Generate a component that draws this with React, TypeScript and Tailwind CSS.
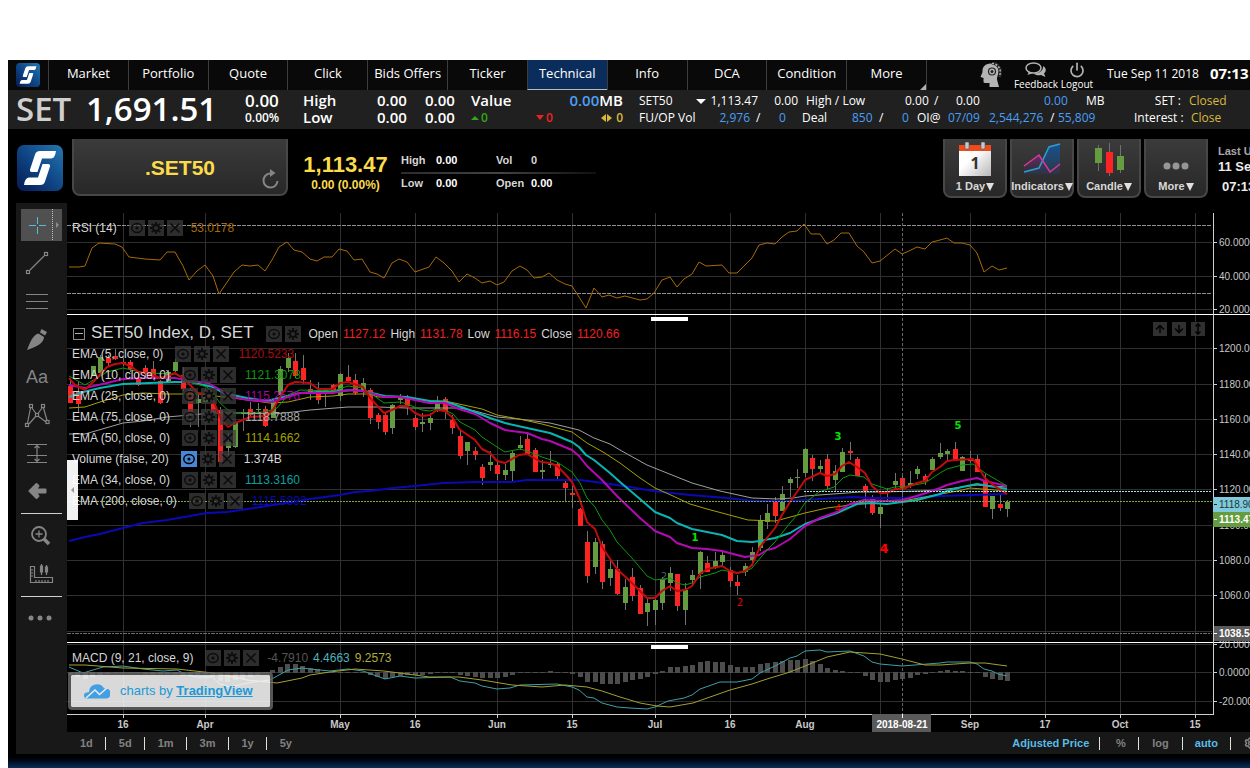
import React from "react";
import { ArrowDown, ArrowUp, MoveVertical, Power, Settings, X } from "lucide-react";

/* x, high, low, body top, body bottom, rising (1) or falling (0) */
const CANDLES: number[][] = [
  [70, 380, 403, 386, 403, 0], [78, 382, 413, 391, 404, 0], [93, 366, 376, 366, 376, 1], [100, 355, 373, 357, 373, 1],
  [108, 355, 366, 358, 363, 0], [115, 349, 360, 356, 359, 0], [123, 358, 366, 362, 364, 0], [130, 360, 372, 362, 369, 0],
  [138, 374, 386, 378, 385, 0], [145, 365, 379, 368, 373, 0], [153, 361, 380, 369, 378, 0], [160, 380, 404, 381, 403, 0],
  [168, 370, 383, 372, 381, 1], [175, 359, 372, 362, 371, 1], [183, 367, 391, 375, 389, 0], [190, 388, 427, 390, 414, 0],
  [198, 395, 427, 399, 403, 1], [205, 390, 403, 395, 402, 1], [213, 400, 413, 404, 412, 0], [220, 407, 462, 410, 462, 0],
  [228, 433, 462, 442, 448, 1], [235, 421, 448, 422, 447, 1], [243, 409, 431, 412, 414, 1], [250, 402, 416, 409, 415, 0],
  [258, 403, 414, 409, 410, 1], [265, 406, 427, 409, 426, 0], [273, 400, 418, 401, 418, 1], [280, 366, 397, 369, 395, 1],
  [288, 353, 372, 358, 368, 1], [295, 353, 378, 361, 376, 0], [303, 355, 384, 368, 380, 0], [310, 380, 400, 389, 392, 0],
  [318, 382, 404, 390, 400, 0], [325, 388, 407, 389, 394, 1], [333, 384, 391, 385, 391, 0], [340, 373, 401, 374, 396, 1],
  [348, 365, 381, 377, 381, 0], [355, 374, 395, 380, 393, 0], [363, 378, 397, 383, 392, 1], [370, 388, 424, 390, 418, 0],
  [378, 413, 429, 415, 422, 0], [385, 412, 435, 415, 432, 0], [392, 404, 434, 405, 428, 1], [400, 394, 404, 398, 400, 1],
  [407, 395, 415, 398, 406, 0], [415, 415, 430, 418, 427, 0], [422, 413, 432, 422, 424, 1], [430, 413, 430, 418, 423, 1],
  [437, 396, 412, 401, 409, 1], [445, 397, 419, 399, 412, 0], [452, 415, 434, 420, 428, 0], [460, 430, 459, 436, 456, 0],
  [467, 442, 465, 442, 451, 1], [475, 447, 460, 451, 455, 0], [482, 464, 485, 467, 478, 0], [490, 451, 471, 462, 465, 1],
  [497, 460, 480, 465, 474, 0], [505, 464, 480, 470, 475, 1], [512, 450, 482, 453, 471, 1], [520, 436, 450, 445, 448, 1],
  [527, 434, 454, 439, 454, 0], [535, 448, 472, 450, 472, 0], [542, 460, 481, 470, 472, 1], [550, 451, 468, 464, 465, 1],
  [557, 462, 479, 464, 476, 0], [565, 479, 501, 483, 488, 0], [572, 486, 508, 493, 495, 0], [580, 508, 526, 509, 526, 0],
  [587, 531, 583, 542, 576, 0], [595, 538, 574, 542, 567, 1], [602, 541, 589, 544, 582, 0], [610, 558, 586, 569, 578, 1],
  [617, 560, 595, 569, 594, 0], [625, 579, 610, 587, 603, 1], [632, 568, 601, 577, 596, 0], [640, 585, 614, 588, 614, 0],
  [647, 597, 626, 603, 612, 1], [655, 599, 625, 600, 610, 1], [662, 577, 610, 579, 603, 1], [670, 567, 591, 573, 583, 1],
  [677, 574, 611, 574, 606, 0], [685, 583, 625, 590, 610, 1], [692, 570, 585, 575, 580, 1], [700, 551, 589, 552, 574, 1],
  [707, 556, 572, 563, 572, 0], [715, 552, 569, 561, 568, 1], [722, 550, 566, 555, 562, 1], [730, 567, 587, 570, 581, 0],
  [737, 575, 595, 582, 586, 0], [745, 563, 576, 566, 572, 1], [752, 547, 566, 552, 560, 1], [760, 515, 551, 520, 548, 1],
  [767, 504, 529, 513, 522, 1], [775, 497, 523, 501, 516, 0], [782, 486, 511, 494, 511, 1], [790, 477, 497, 479, 483, 1],
  [797, 469, 488, 477, 478, 1], [805, 448, 477, 449, 473, 1], [812, 455, 481, 458, 469, 0], [820, 460, 473, 466, 469, 1],
  [827, 454, 489, 459, 486, 0], [835, 465, 491, 471, 480, 1], [842, 448, 472, 452, 472, 1], [850, 442, 460, 451, 453, 0],
  [857, 457, 476, 459, 476, 0], [865, 484, 508, 486, 491, 0], [872, 495, 515, 498, 513, 0], [880, 503, 528, 507, 514, 1],
  [887, 488, 500, 497, 499, 1], [895, 473, 490, 481, 485, 1], [902, 476, 498, 478, 488, 0], [910, 471, 488, 483, 486, 1],
  [917, 466, 479, 469, 474, 1], [925, 474, 485, 476, 481, 0], [932, 457, 470, 459, 470, 1], [940, 443, 459, 453, 457, 1],
  [947, 449, 461, 451, 454, 1], [955, 442, 460, 449, 460, 0], [962, 456, 471, 457, 471, 1], [970, 451, 463, 459, 461, 0],
  [977, 455, 472, 459, 472, 0], [985, 474, 507, 480, 507, 0], [992, 496, 519, 496, 509, 1], [1000, 495, 511, 504, 508, 0],
  [1007, 500, 517, 502, 509, 1],
];

const HISTOGRAM = [
  -3, -5, -7, -5, -3, -2, -1, 0, 0, -1, -2, -2, -2, -2, -2, -4, -4, -3, -2, -5, -9, -10, -8, -7, -5, -3, 0, 3, 6, 9, 9,
  7, 5, 4, 1, 1, 1, 1, 0, -1, -3, -5, -7, -5, -4, -3, -3, -3, -2, 0, -1, -1, -3, -4, -5, -6, -6, -6, -5, -3, 0, 1, 1, 1,
  2, 1, 0, -2, -5, -10, -10, -12, -12, -12, -10, -8, -7, -5, -2, 2, 6, 6, 7, 8, 11, 12, 11, 11, 8, 6, 6, 6, 9, 10, 11,
  12, 13, 13, 14, 12, 9, 5, 3, 2, 1, -1, -4, -8, -10, -10, -8, -7, -6, -3, -2, 0, 2, 3, 2, 2, 1, -1, -5, -7, -8, -9,
];

const RSI =
  "69,267 79,267 85,266 92,248 99,243 115,244 122,247 129,257 145,259 160,260 167,252 175,252 183,266 189,280 197,271 205,265 213,276 219,294 234,272 242,265 250,266 258,265 265,271 272,260 279,247 287,242 294,250 302,252 310,259 317,261 324,257 332,257 339,249 347,251 354,260 362,259 370,272 377,274 384,278 392,263 399,259 407,262 415,272 429,267 436,257 444,263 452,271 459,282 467,274 475,278 482,283 490,281 497,285 504,282 512,271 520,266 527,270 534,278 542,277 549,273 557,280 565,284 572,286 586,308 594,288 602,297 609,295 617,298 625,296 640,300 647,299 654,293 662,280 670,277 677,287 684,279 692,274 699,262 706,266 722,265 729,273 737,273 752,258 759,245 767,243 775,244 782,237 789,232 797,231 804,224 811,234 820,234 827,244 834,240 841,233 849,233 857,246 864,252 872,263 880,261 895,249 902,254 909,251 917,247 925,249 932,242 940,240 947,238 954,243 962,243 970,245 977,253 984,272 992,266 999,270 1007,268";

const AVERAGES: { name: string; color: string; width: number; points: string }[] = [
  {
    name: "EMA 200", color: "#0a0ab4", width: 2,
    points: "69,541 85,537 100,534 123,528 143,523 167,520 190,516 207,513 227,512 267,506 310,499 340,495 355,492 370,491 393,488 415,486 443,483 477,482 512,482 527,480 580,480 603,483 630,487 653,491 690,495 727,498 753,501 787,501 820,499 853,497 873,498 903,498 940,496 1007,494",
  },
  {
    name: "EMA 75", color: "#a0a0a0", width: 1,
    points: "69,434 85,434 123,423 143,421 167,417 213,413 243,413 273,414 293,412 310,410 348,407 378,407 407,408 459,408 475,411 497,417 519,419 550,423 579,430 594,438 610,444 620,450 647,465 692,483 720,491 752,498 777,499 793,498 805,496 833,494 860,492 880,492 920,491 940,490 962,487 977,485 1007,487",
  },
  {
    name: "EMA 50", color: "#a8a000", width: 1,
    points: "69,408 85,407 100,402 123,395 143,393 167,394 200,394 240,399 270,403 288,402 310,397 333,396 348,394 370,394 378,397 400,397 429,401 445,401 459,404 482,409 497,415 519,419 542,424 557,428 572,432 587,443 603,452 620,463 640,478 655,488 673,496 690,504 707,509 722,513 748,520 775,521 783,519 805,513 827,508 843,506 857,503 872,501 902,501 925,497 940,494 947,493 962,490 970,488 1007,491",
  },
  {
    name: "EMA 34", color: "#0ab4b4", width: 2,
    points: "69,397 83,392 100,388 123,384 150,383 175,382 190,382 213,387 223,393 247,398 267,401 283,397 300,393 340,391 355,390 363,391 385,396 407,397 430,401 445,402 453,404 475,412 490,418 505,423 527,428 550,433 572,442 579,447 586,455 594,460 610,473 620,482 640,499 655,512 670,518 677,523 692,529 707,532 722,535 737,541 752,542 760,541 775,538 790,533 805,524 837,513 857,504 872,503 887,504 917,500 940,494 947,491 962,487 977,484 1007,489",
  },
  {
    name: "EMA 25", color: "#b40ab4", width: 2,
    points: "69,385 85,388 107,383 123,379 145,378 175,378 190,381 208,383 217,388 233,397 248,400 273,402 288,397 300,393 333,393 348,390 363,391 384,397 400,397 415,400 429,403 445,403 459,409 475,414 490,423 505,430 527,433 542,439 550,441 572,450 579,456 587,466 602,480 617,496 640,518 655,531 670,537 677,543 692,548 707,549 722,551 737,555 745,557 759,555 767,550 775,548 790,539 805,526 820,518 837,512 850,504 864,500 887,501 903,500 923,494 940,488 947,485 962,481 977,478 985,481 1007,486",
  },
  {
    name: "EMA 10", color: "#0a9a0a", width: 1,
    points: "69,376 85,385 107,372 123,368 145,373 175,374 190,382 207,387 213,393 220,403 228,410 235,413 265,412 277,408 288,395 300,390 333,391 348,386 363,388 370,393 384,403 400,402 407,404 422,410 430,411 437,409 445,410 453,414 460,422 475,430 482,437 497,447 505,452 520,449 527,451 542,457 557,462 572,472 580,483 587,498 595,507 602,520 610,530 617,542 632,558 647,576 655,580 670,578 677,583 685,585 692,583 700,577 715,573 722,570 737,573 745,572 752,568 767,550 775,542 790,523 797,515 805,503 819,492 834,487 843,478 850,475 864,477 872,484 887,489 895,487 909,486 925,483 940,473 947,469 962,465 973,464 985,473 1007,486",
  },
  {
    name: "EMA 5", color: "#c00c0c", width: 2,
    points: "69,378 75,385 85,390 95,380 107,367 115,364 123,363 132,367 138,372 145,373 153,375 160,378 168,376 175,373 183,378 190,385 198,393 205,394 213,400 220,417 228,427 235,423 243,420 250,417 265,416 273,410 280,397 288,385 295,382 310,383 318,389 333,389 340,383 348,382 363,387 370,398 384,413 392,410 400,406 407,406 415,413 422,416 430,415 437,410 445,411 453,418 459,429 475,440 482,449 490,453 497,461 505,463 519,455 527,454 541,462 550,463 557,466 565,474 572,482 579,497 587,522 595,529 602,547 617,569 632,583 640,591 647,598 655,598 662,591 670,586 677,591 685,590 692,586 700,574 707,569 722,566 730,571 737,573 745,571 752,565 760,547 767,538 775,528 782,515 790,502 797,492 805,480 820,473 827,476 835,474 842,466 849,462 857,467 865,473 872,486 880,493 887,493 895,489 903,489 917,483 925,481 932,472 940,467 947,461 955,460 973,459 978,467 985,478 993,485 1007,494",
  },
];

const MACD =
  "69,667 83,673 103,667 123,666 143,669 163,671 177,670 187,675 197,677 212,677 220,684 230,687 247,683 270,680 288,670 302,668 310,669 330,671 348,669 363,671 385,679 400,676 415,678 450,677 460,681 475,683 482,686 497,689 510,688 520,685 557,684 572,687 579,690 587,697 594,698 602,703 617,707 630,708 647,709 655,707 668,701 684,698 692,695 700,689 720,682 737,682 752,679 760,673 775,666 790,658 797,656 805,651 820,650 827,652 850,651 864,656 872,662 880,664 902,666 940,663 947,662 970,662 977,664 984,669 992,671 998,674 1007,676";
const SIGNAL =
  "69,665 85,665 123,668 177,669 213,673 247,680 277,683 302,678 310,675 330,672 355,669 384,671 415,675 429,677 459,677 482,680 512,685 542,687 565,685 587,687 602,691 620,697 640,703 657,706 670,707 693,703 730,690 752,684 767,679 790,672 805,666 827,657 850,652 880,654 902,659 925,665 940,665 970,663 985,663 1007,666";

const DATES: [number, string][] = [
  [123, "16"], [205, "Apr"], [340, "May"], [415, "16"], [497, "Jun"], [572, "15"], [655, "Jul"], [730, "16"],
  [805, "Aug"], [880, ""], [970, "Sep"], [1045, "17"], [1120, "Oct"], [1195, "15"],
];

const LEVELS: [number, string][] = [
  [242, "60.0000"], [276, "40.0000"], [309, "20.0000"], [348, "1200.00"], [384, "1180.00"], [419, "1160.00"],
  [454, "1140.00"], [489, "1120.00"], [525, "1100.00"], [560, "1080.00"], [595, "1060.00"], [631, ""],
  [644, "20.0000"], [672, "0.0000"], [701, "-20.0000"],
];

function Chart() {
  return (
    <svg className="block h-[529px] w-full" role="img" aria-label="SET50 price chart with RSI and MACD">
      <g transform="translate(-67 -203)">
        <g shapeRendering="crispEdges">
          {DATES.map(([x]) => (
            <rect key={x} x={x} y={213} width={1} height={501} fill="#303030" />
          ))}
          {LEVELS.map(([y]) => (
            <rect key={y} x={67} y={y} width={1145} height={1} fill="#303030" />
          ))}
          <path d="M67 225.5H1212M67 293.5H1212" stroke="#8f8f8f" strokeDasharray="4 1" />
          {HISTOGRAM.map((v, i) => (
            <rect key={i} x={Math.floor(68 + i * 7.5)} y={v > 0 ? 673 - v : 672} width={5} height={Math.max(1, Math.abs(v))} fill="#4d4d4d" />
          ))}
          {CANDLES.map(([x, high, low, top, bottom, up]) => (
            <g key={x}>
              <rect x={x} y={high} width={1} height={low - high} fill="#737373" />
              <rect x={x - 2} y={top} width={5} height={bottom - top} fill={up ? "#659c40" : "#ff2424"} />
            </g>
          ))}
        </g>
        <polyline points={RSI} fill="none" stroke="#a86a08" />
        {AVERAGES.map((a) => (
          <polyline key={a.name} points={a.points} fill="none" stroke={a.color} strokeWidth={a.width} strokeLinejoin="round" />
        ))}
        <polyline points={MACD} fill="none" stroke="#3f9fa6" strokeWidth={1} />
        <polyline points={SIGNAL} fill="none" stroke="#a3a032" strokeWidth={1} />
        <g shapeRendering="crispEdges" fill="none">
          <path d="M67 501.5H1212" stroke="#7aa845" strokeDasharray="2 1" />
          <path d="M804 491.5H1212" stroke="#a5dfe8" strokeDasharray="2 1" />
          <path d="M67 633.5H1212" stroke="#6c6c6c" strokeDasharray="4 1 2 1" />
          <path d="M902.5 213V714" stroke="#666" strokeDasharray="3 2" />
          <path d="M67 314.5H1900M67 642.5H1900" stroke="#fff" />
          <path d="M1213.5 213V714.5H67" stroke="#cfcfcf" />
          {DATES.map(([x, label]) => label && <path key={x} d={`M${x}.5 715v3`} stroke="#cfcfcf" />)}
          {LEVELS.map(([y, label]) => label && <path key={y} d={`M1214 ${y}.5h3`} stroke="#cfcfcf" />)}
          <path d="M651 317h37v4h-37zM651 645h37v4h-37z" fill="#fff" />
        </g>
        <g fontFamily="Liberation Sans, sans-serif" fontSize={10} fill="#c8c8c8" stroke="none">
          {LEVELS.map(([y, label]) => (
            <text key={y} x={1219} y={y + 4}>{label}</text>
          ))}
          <g textAnchor="middle" fontWeight="bold">
            {DATES.map(([x, label]) => (
              <text key={x} x={x} y={728}>{label}</text>
            ))}
          </g>
          <path d="M1214 626h700v15h-700zM872 714h59v18h-59z" fill="#5a5a5a" />
          <path d="M1213 497h700v15h-700z" fill="#7fcbdb" />
          <path d="M1213 512h700v15h-700z" fill="#659c40" />
          <path d="M1214 504.5h3" stroke="#222" />
          <path d="M1214 519.5h3M1214 633.5h3M902.5 714v4" stroke="#fff" />
          <text x={1219} y={508} fill="#22333a">1118.90</text>
          <g fontWeight="bold" fill="#fff">
            <text x={1219} y={523}>1113.47</text>
            <text x={1219} y={637}>1038.54</text>
            <text x={902} y={728} textAnchor="middle">2018-08-21</text>
          </g>
        </g>
        <g fontFamily="DejaVu Sans, sans-serif" fontSize={10} textAnchor="middle">
          <text x={695} y={541} fill="#00e600" fontWeight="bold">1</text>
          <text x={740} y={606} fill="#e00000">2</text>
          <text x={664} y={580} fill="#4a5f66">2</text>
          <text x={838} y={440} fill="#00e600" fontWeight="bold">3</text>
          <text x={838} y={512} fill="#e00000">4</text>
          <text x={884} y={553} fill="#ff0000" fontSize={13} fontWeight="bold">4</text>
          <text x={958} y={429} fill="#00e600" fontWeight="bold">5</text>
        </g>
      </g>
    </svg>
  );
}

function Logo({ className }: { className: string }) {
  return (
    <svg viewBox="0 0 46 46" className={className} aria-hidden="true">
      <defs>
        <linearGradient id="logo-blue" x1="0" y1="1" x2="1" y2="0">
          <stop offset="0" stopColor="#061a52" />
          <stop offset="0.5" stopColor="#0f4686" />
          <stop offset="1" stopColor="#2478b0" />
        </linearGradient>
      </defs>
      <rect width="46" height="46" rx="7" fill="url(#logo-blue)" />
      <path d="M39 6H23Q19 6 18 9.500L13 24.500Q12.500 27 15 27H20.500L25 13.500H34Q38 13.500 39 6z" fill="#fff" />
      <path d="M7 40H23Q27 40 28 36.500L33 21.500Q33.500 19 31 19H25.500L21 32.500H12Q8 32.500 7 40z" fill="#fff" />
    </svg>
  );
}

const NAV = ["Market", "Portfolio", "Quote", "Click", "Bids Offers", "Ticker", "Technical", "Info", "DCA", "Condition", "More"];

function NavBar() {
  return (
    <nav className="flex h-[30px] items-stretch bg-[#090909] text-[13px] text-white">
      <div className="flex w-10 shrink-0 items-center justify-center"><Logo className="h-6 w-6" /></div>
      <div className="flex w-[878px] shrink-0">
        {NAV.map((n) => (
          <a
            key={n}
            href="#"
            className={
              "relative flex flex-1 basis-0 items-center justify-center whitespace-nowrap border-l border-[#3c3c3c] " +
              (n === "Technical" ? "border-b border-b-[#b4b8c0] bg-[#0b2d5c] pb-[2px]" : "pb-[3px]")
            }
          >
            {n}
            {n === "More" && <span className="absolute bottom-0 right-0 border-b-[6px] border-l-[6px] border-b-[#b0b0b0] border-l-transparent" />}
          </a>
        ))}
      </div>
      <div className="w-px shrink-0 bg-[#3c3c3c]" />
      <div className="ml-[53px] w-[34px] shrink-0 pt-[2px]">
        <svg viewBox="0 0 22 25" className="h-[25px] w-[22px]" aria-label="Robot advisor">
          <path d="M2.500 10C2 5 5.500 1.500 10.500 1.500c5.500 0 8.500 3.500 8 8-.4 4-1.500 5-1.500 8l2 7.500H9.500V21H5c-1.500 0-1.500-1-1.500-2v-3L.5 15z" fill="#b4b4b4" />
          <circle cx="12" cy="9.500" r="3.500" fill="none" stroke="#222" strokeWidth="1.200" />
          <circle cx="12" cy="9.500" r="1.500" fill="#222" />
          <path d="M12 1a9 9 0 0 1 7 14" fill="none" stroke="#222" strokeWidth="3.500" />
          <path d="M12 1.500a8.500 8.500 0 0 1 7 13" fill="none" stroke="#b4b4b4" strokeWidth="1.500" strokeDasharray="2 1.500" />
        </svg>
      </div>
      <a href="#" className="flex w-[44px] shrink-0 flex-col items-center pt-[2px] text-[10px] leading-3">
        <svg viewBox="0 0 22 16" className="h-4 w-[22px]" aria-hidden="true">
          <path d="M18 4c3 1.500 4 5 1 7.500L20.500 15 16 13c-3 .7-6 0-7.500-1.500 6 .3 10-3 9.500-7.500z" fill="#b4b4b4" />
          <ellipse cx="8.500" cy="6" rx="7.500" ry="5" fill="none" stroke="#b4b4b4" strokeWidth="1.500" />
          <path d="M4 9.500 2.500 13 8 11z" fill="#b4b4b4" />
        </svg>
        Feedback
      </a>
      <a href="#" className="ml-[2px] flex w-[34px] shrink-0 flex-col items-center pt-[2px] text-[10px] leading-3">
        <Power className="h-4 w-4 text-[#b4b4b4]" strokeWidth={2.5} />
        Logout
      </a>
      <div className="ml-[13px] shrink-0 whitespace-nowrap pt-1 text-xs leading-[19px]">Tue Sep 11 2018</div>
      <div className="ml-[11px] shrink-0 pt-1 text-[15px] font-bold leading-[19px]">07:13</div>
    </nav>
  );
}

type Cell = [string, string];
const BLUE = "text-[#4a9ff5]";
const GOLD = "text-[#d9b93c]";

const MARKET_TOP: Cell[] = [
  ["SET50", "w-[57px]"], ["▾", "w-[9px]"], ["1,113.47", "w-[53px] text-right"], ["0.00", "w-[40px] text-right"],
  ["High / Low", "ml-2 w-[99px]"], ["0.00", "w-[29px]"], ["/", "w-[22px]"], ["0.00", "w-[88px]"],
  ["0.00", "w-[42px] text-[#4a9ff5]"], ["MB", "w-[46px]"], ["SET :", "w-[49px] text-right"], ["Closed", "ml-2 text-[#d9b93c]"],
];
const MARKET_BOTTOM: Cell[] = [
  ["FU/OP Vol", "w-[57px]"], ["2,976", "w-[54px] text-right text-[#4a9ff5]"], ["/", "ml-[6px] w-[23px]"], ["0", "w-[23px] text-[#4a9ff5]"],
  ["Deal", "w-[50px]"], ["850", "w-[27px] text-[#4a9ff5]"], ["/", "w-[23px]"], ["0", "w-[15px] text-[#4a9ff5]"],
  ["OI@", "w-[31px]"], ["07/09", "w-[41px] text-[#4a9ff5]"], ["2,544,276", "w-[61px] text-[#4a9ff5]"], ["/", "w-[8px]"],
  ["55,809", "w-[76px] text-[#4a9ff5]"], ["Interest :", "w-[49px] text-right"], ["Close", "ml-2 text-[#d9b93c]"],
];

function MarketRow({ cells }: { cells: Cell[] }) {
  return (
    <div className="flex whitespace-nowrap">
      {cells.map(([text, cls], i) => (
        <span key={i} className={"shrink-0 " + cls}>
          {text === "▾" ? <span className="inline-block border-x-[5px] border-t-[5px] border-x-transparent border-t-white align-middle" /> : text}
        </span>
      ))}
    </div>
  );
}

function TickerBar() {
  return (
    <div className="flex h-[39px] whitespace-nowrap bg-[#202020] pl-2 text-[15px] font-semibold leading-[17px] text-white">
      <div className="w-[70px] shrink-0 text-[33px] leading-[37px] text-[#cfcfcf]">SET</div>
      <div className="w-[159px] shrink-0 text-[33px] leading-[37px]">1,691.51</div>
      <div className="w-[58px] shrink-0 pt-[2px]">
        <div className="text-[17px]">0.00</div>
        <div className="text-xs leading-[17px]">0.00%</div>
      </div>
      <div className="w-[74px] shrink-0 pt-[2px]">High<br />Low</div>
      <div className="w-[48px] shrink-0 pt-[2px]">0.00<br />0.00</div>
      <div className="w-[46px] shrink-0 pt-[2px]">0.00<br />0.00</div>
      <div className="w-[152px] shrink-0 pt-[2px]">
        <div className="flex justify-between"><span>Value</span><span><span className={BLUE}>0.00</span>MB</span></div>
        <div className="flex items-center justify-between text-xs leading-[17px]">
          <span className="flex items-center gap-[2px] text-[#35a615]"><i className="border-x-[4px] border-b-[4px] border-x-transparent border-b-[#35a615]" />0</span>
          <span className="flex items-center gap-[2px] text-[#f02020]"><i className="border-x-[4px] border-t-[5px] border-x-transparent border-t-[#f02020]" />0</span>
          <span className={"flex items-center gap-px " + GOLD}>
            <i className="border-y-[4px] border-r-[5px] border-y-transparent border-r-[#d9b93c]" />
            <i className="mr-[3px] border-y-[4px] border-l-[5px] border-y-transparent border-l-[#d9b93c]" />0
          </span>
        </div>
      </div>
      <div className="ml-4 shrink-0 pt-[2px] text-xs font-normal leading-[17px]">
        <MarketRow cells={MARKET_TOP} />
        <MarketRow cells={MARKET_BOTTOM} />
      </div>
    </div>
  );
}

const PANEL_BUTTON = "rounded-b-lg border-x-2 border-b-2 border-[#474747] bg-linear-to-b from-[#3b3b3b] to-[#282828]";

function CalendarIcon() {
  return (
    <svg viewBox="0 0 34 34" className="h-[34px] w-[34px] shrink-0" aria-hidden="true">
      <defs>
        <linearGradient id="page" x1="0" y1="0" x2="1" y2="1"><stop offset="0.400" stopColor="#fff" /><stop offset="1" stopColor="#b8b8b8" /></linearGradient>
      </defs>
      <rect x="1" y="3" width="32" height="31" fill="url(#page)" />
      <rect x="1" y="3" width="32" height="6" fill="#f04a18" />
      <rect x="7" y="0" width="4" height="7" rx="1" fill="#b9cdd6" stroke="#555" strokeWidth=".6" />
      <rect x="23" y="0" width="4" height="7" rx="1" fill="#b9cdd6" stroke="#555" strokeWidth=".6" />
      <text x="17" y="27" textAnchor="middle" fontFamily="Open Sans, sans-serif" fontWeight="bold" fontSize="16" fill="#333">1</text>
    </svg>
  );
}

function IndicatorsIcon() {
  return (
    <svg viewBox="0 0 38 34" className="h-[34px] w-[38px] shrink-0" aria-hidden="true">
      <defs>
        <linearGradient id="area-blue" x1="0" y1="0" x2="0" y2="1"><stop offset="0" stopColor="#15508f" /><stop offset="1" stopColor="#15508f" stopOpacity=".2" /></linearGradient>
        <linearGradient id="area-pink" x1="0" y1="0" x2="0" y2="1"><stop offset="0" stopColor="#6a2a6a" /><stop offset="1" stopColor="#3a2a4a" stopOpacity=".1" /></linearGradient>
      </defs>
      <path d="M1 30l15-4L26 5l11-3v30H1z" fill="url(#area-blue)" />
      <path d="M1 24l15-11 11 17 10-8v12H1z" fill="url(#area-pink)" />
      <path d="M1 30l15-4L26 5l11-3" fill="none" stroke="#2b9fd2" strokeWidth="1.500" />
      <path d="M1 24l15-11 11 17 10-8" fill="none" stroke="#d83a9a" strokeWidth="1.500" />
    </svg>
  );
}

function CandleIcon() {
  return (
    <svg viewBox="0 0 30 34" className="h-[34px] w-[30px] shrink-0" aria-hidden="true">
      <path d="M4.500 3v26M15.500 1v33M26.500 3v28" stroke="#707070" />
      <path d="M1 6h7v15H1zM23 14h7v14h-7z" fill="#659c40" />
      <path d="M12 10h7v21h-7z" fill="#ff2424" />
    </svg>
  );
}

function DotsIcon() {
  return (
    <svg viewBox="0 0 26 34" className="h-[34px] w-[26px] shrink-0" aria-hidden="true">
      <g fill="#969696"><circle cx="4" cy="24" r="3.500" /><circle cx="13" cy="24" r="3.500" /><circle cx="22" cy="24" r="3.500" /></g>
    </svg>
  );
}

const CHART_TOOLS = [
  { label: "1 Day", icon: <CalendarIcon /> },
  { label: "Indicators", icon: <IndicatorsIcon /> },
  { label: "Candle", icon: <CandleIcon /> },
  { label: "More", icon: <DotsIcon /> },
];

function QuoteHeader() {
  return (
    <section className="flex h-[74px] items-start overflow-hidden pl-[9px] pt-[10px] font-['Liberation_Sans',sans-serif] font-bold text-[#d6d6d6]">
      <Logo className="mt-[6px] h-[46px] w-[46px] shrink-0" />
      <button type="button" className={"relative ml-[9px] h-[57px] w-[216px] shrink-0 pt-[2px] text-[21px] text-[#fbdb4b] " + PANEL_BUTTON}>
        .SET50
        <svg viewBox="0 0 20 22" className="absolute bottom-[4px] right-[6px] h-[22px] w-5" aria-hidden="true">
          <path d="M10 5.500A7 7 0 1 0 17.500 13" fill="none" stroke="#858585" strokeWidth="2" />
          <path d="M10 1l5.500 4-5.500 4z" fill="#858585" />
        </svg>
      </button>
      <div className="ml-[14px] w-[87px] shrink-0 pt-[14px] text-center text-[#fbdb4b]">
        <div className="text-[22px] leading-[24px]">1,113.47</div>
        <div className="whitespace-nowrap text-xs leading-4">0.00 (0.00%)</div>
      </div>
      <div className="ml-3 w-[195px] shrink-0 pt-[11px] text-[11px] leading-[21px]">
        <div className="flex"><span className="w-[35px]">High</span><span className="w-[60px] text-white">0.00</span><span className="w-[35px]">Vol</span><span>0</span></div>
        <div className="mt-px h-[2px] bg-linear-to-r from-[#2c2c2c] via-[#444] to-[#111]" />
        <div className="flex leading-[19px]"><span className="w-[35px]">Low</span><span className="w-[60px] text-white">0.00</span><span className="w-[35px]">Open</span><span className="text-white">0.00</span></div>
      </div>
      <div className="ml-auto flex shrink-0 gap-[3px]">
        {CHART_TOOLS.map((t) => (
          <button key={t.label} type="button" className={"flex h-[59px] w-16 flex-col items-center whitespace-nowrap pt-[3px] text-[11px] text-[#d8d8d8] " + PANEL_BUTTON}>
            {t.icon}
            <span className="flex h-5 shrink-0 items-center pt-px leading-[19px]">
              {t.label}
              <i className="ml-px border-x-[4px] border-t-[8px] border-x-transparent border-t-[#e0e0e0]" />
            </span>
          </button>
        ))}
      </div>
      <div className="w-[42px] shrink-0 overflow-hidden whitespace-nowrap pl-[10px] pt-1 text-[13px] leading-5 text-[#ececec]">
        <div className="text-[11px] leading-4 text-[#a8a8a8]">Last Update</div>
        <div className="leading-4">11 Sep 2018</div>
        <div className="pl-1 leading-6">07:13:25</div>
      </div>
    </section>
  );
}

const line = { fill: "none", stroke: "#858585", strokeWidth: 1.2 };
const TOOLS: { name: string; icon: React.ReactNode }[] = [
  { name: "Trend line", icon: <g {...line}><path d="M6 20 20 6" /><rect x="2.500" y="20.500" width="3" height="3" /><rect x="20.500" y="2.500" width="3" height="3" /></g> },
  { name: "Horizontal lines", icon: <g {...line}><path d="M2 6.500h22M2 13.500h22M2 20.500h22" /></g> },
  { name: "Brush", icon: <g fill="#858585"><path d="M17.500 3l5.500 3-2 3.500-5-3z" /><path d="M14.500 7.500l5.500 3.500c0 5-5 9-17 13C6 16.500 8.500 9 14.500 7.500z" /></g> },
  { name: "Text", icon: <text x="13" y="19" textAnchor="middle" fontSize="18" fontFamily="Liberation Sans, sans-serif" fill="#858585">Aa</text> },
  { name: "Pattern", icon: <g {...line}><path d="M3.500 21 6.500 6M8 6l4 5.500M14 11.500 18 6M19.500 6l3.500 12.500M5 22l7-8M14 14l8 6" /><rect x="1.500" y="21.500" width="3" height="3" /><rect x="5.500" y="2.500" width="3" height="3" /><rect x="17.500" y="2.500" width="3" height="3" /><rect x="22" y="18.500" width="3" height="3" /><rect x="11.500" y="11.500" width="3" height="3" /></g> },
  { name: "Price range", icon: <g {...line}><path d="M3 4.500h20M3 15.500h20M3 22.500h20M13 6v15M10.500 8l2.500-2.500L15.500 8M10.500 19l2.500 2.500 2.500-2.500" /></g> },
  { name: "Back", icon: <path d="M5.500 13 12.500 6l2 2-2.500 3.500h9.500v3H12l2.500 3.500-2 2z" fill="#858585" stroke="#858585" strokeWidth="2" strokeLinejoin="round" /> },
];

function ToolButton({ name, icon }: { name: string; icon: React.ReactNode }) {
  return (
    <button type="button" aria-label={name} className="flex h-8 w-[41px] items-center justify-center pr-[9px]">
      <svg viewBox="0 0 26 26" className="h-[26px] w-[26px] overflow-visible">{icon}</svg>
    </button>
  );
}

function Sidebar() {
  return (
    <aside className="flex w-[51px] shrink-0 flex-col items-center gap-[6px] bg-[#181818] pt-[6px]">
      <button type="button" aria-label="Crosshair" className="flex h-8 w-[41px] items-center bg-[#505050]">
        <svg viewBox="0 0 41 32" className="h-8 w-[41px]">
          <path d="M16.500 8v7M16.500 18v7M8 16.500h7M18 16.500h7" stroke="#5cb8dc" />
          <path d="M31.500 0v32" stroke="#c0c0c0" strokeDasharray="1 1" />
          <path d="M35 13l3 3-3 3z" fill="#8c8c8c" />
        </svg>
      </button>
      {TOOLS.map((t) => <ToolButton key={t.name} {...t} />)}
      <div className="h-px w-[41px] bg-[#d0d0d0]" />
      <ToolButton name="Zoom in" icon={<g fill="none" stroke="#858585"><circle cx="15" cy="11" r="7" strokeWidth="1.800" /><path d="M15 7.500v7M11.500 11h7" strokeWidth="1.300" /><path d="M20 16l5 5" strokeWidth="3.500" /></g>} />
      <ToolButton name="Measure" icon={<g fill="none" stroke="#858585" strokeWidth="1.200"><path d="M6.500 5.500h4v11h18v5h-22zM7 9h2M7 12h2M7 15h2M12 19v2M15 19v2M18 19v2M21 19v2M24 19v2" /><path d="M17.500 3v11M22.500 4v10" /><path d="M16.500 5v6h2V5zM21.500 6v5h2V6z" fill="#858585" /></g>} />
      <div className="h-px w-[41px] bg-[#d0d0d0]" />
      <ToolButton name="More tools" icon={<g fill="#858585"><circle cx="7" cy="12" r="2.500" /><circle cx="16" cy="12" r="2.500" /><circle cx="25" cy="12" r="2.500" /></g>} />
    </aside>
  );
}

const SQUARE = "flex h-4 w-4 items-center justify-center bg-[#3c3c3c]/75 text-[#0c0c0c]";

function LegendButtons({ active, closable = true }: { active?: boolean; closable?: boolean }) {
  return (
    <span className="ml-3 flex gap-[3px]">
      <button type="button" aria-label="Show or hide" className={active ? "flex h-4 w-4 items-center justify-center bg-[#4a86d8] text-black" : SQUARE}>
        <svg viewBox="0 0 12 12" className="h-3 w-3">
          <ellipse cx="6" cy="6" rx="5.200" ry="4.500" fill="none" stroke="currentColor" strokeWidth="1.500" />
          <circle cx="6" cy="6" r="1.600" fill="currentColor" />
        </svg>
      </button>
      <button type="button" aria-label="Settings" className={SQUARE}>
        <svg viewBox="0 0 12 12" className="h-3 w-3" fill="none" stroke="currentColor">
          <circle cx="6" cy="6" r="3" strokeWidth="1.800" />
          <path d="M6 0v2M6 10v2M0 6h2M10 6h2M1.800 1.800l1.400 1.400M8.800 8.800l1.400 1.400M10.200 1.800 8.800 3.200M3.200 8.800l-1.400 1.400" strokeWidth="1.800" />
        </svg>
      </button>
      {closable && <button type="button" aria-label="Remove" className={SQUARE}><X className="h-4 w-4" strokeWidth={2.5} /></button>}
    </span>
  );
}

const LEGEND = [
  { name: "EMA (5, close, 0)", value: "1120.5233", color: "text-[#a80c0c]" },
  { name: "EMA (10, close, 0)", value: "1121.3078", color: "text-[#0a9a0a]" },
  { name: "EMA (25, close, 0)", value: "1115.2576", color: "text-[#a00aa0]" },
  { name: "EMA (75, close, 0)", value: "1118.7888", color: "text-[#a8a8a8]" },
  { name: "EMA (50, close, 0)", value: "1114.1662", color: "text-[#a8a000]" },
  { name: "Volume (false, 20)", value: "1.374B", color: "text-[#d6d6d6]", active: true },
  { name: "EMA (34, close, 0)", value: "1113.3160", color: "text-[#0aa0a0]" },
  { name: "EMA (200, close, 0)", value: "1115.5892", color: "text-[#0a0aa8]" },
];

const OHLC = [["Open", "1127.12"], ["High", "1131.78"], ["Low", "1116.15"], ["Close", "1120.66"]];

function ChartOverlays() {
  return (
    <div className="absolute inset-0 text-xs text-[#d6d6d6]">
      <div className="absolute left-[5px] top-[17px] flex h-4 items-center">
        RSI (14)<LegendButtons /><span className="ml-2 text-[#a86a08]">53.0178</span>
      </div>
      <div className="absolute left-[5px] top-[120px]">
        <div className="flex h-5 items-center whitespace-nowrap pt-px">
          <button type="button" aria-label="Collapse legend" className="ml-px flex h-3 w-3 items-center justify-center border border-[#8a8a8a]"><i className="h-px w-2 bg-[#b0b0b0]" /></button>
          <h1 className="ml-[6px] text-[17px]">SET50 Index, D, SET</h1>
          <LegendButtons closable={false} />
          <span className="ml-2 flex gap-[5px]">
            {OHLC.map(([k, v]) => (
              <span key={k} className="flex gap-[5px]"><span>{k}</span><span className="text-[#f02020]">{v}</span></span>
            ))}
          </span>
        </div>
        <ul>
          {LEGEND.map((l) => (
            <li key={l.name} className="flex h-[21px] items-center">
              {l.name}<LegendButtons active={l.active} /><span className={"ml-[9px] " + l.color}>{l.value}</span>
            </li>
          ))}
        </ul>
      </div>
      <div className="absolute left-[1086px] top-[119px] flex gap-[5px]">
        {[ArrowUp, ArrowDown, MoveVertical].map((Icon, i) => (
          <button key={i} type="button" aria-label={["Move up", "Move down", "Maximize"][i]} className="flex h-[14px] w-[14px] items-center justify-center bg-[#303030] text-black">
            <Icon className="h-3 w-3" strokeWidth={3} />
          </button>
        ))}
      </div>
      <div className="absolute left-[5px] top-[447px] flex h-4 items-center gap-1">
        <span className="flex">MACD (9, 21, close, 9)<LegendButtons /></span>
        <span className="ml-1 text-[#555]">-4.7910</span><span className="ml-px text-[#4fb3bd]">4.4663</span><span className="ml-px text-[#b0ad3c]">9.2573</span>
      </div>
      <button type="button" aria-label="Toggle toolbar" className="absolute left-0 top-[257px] flex h-[60px] w-[11px] items-center justify-center bg-white/95">
        <i className="border-y-[3px] border-r-[3px] border-y-transparent border-r-[#999]" />
      </button>
      <div className="absolute left-[1px] top-[469px] flex h-[38px] items-center whitespace-nowrap rounded-sm border-[3px] border-[#6a6a6a]/80 bg-white/85 bg-clip-padding pl-[13px] pr-[17px] text-[13px] text-[#1c98d6]">
        <svg viewBox="0 0 26 16" className="mr-[10px] h-4 w-[26px]" aria-hidden="true">
          <path d="M3 15.500a2.800 2.800 0 0 1 0-6L5 9A8 8 0 0 1 20 5.500a5.200 5.200 0 0 1 3 10z" fill="#449fe2" />
          <path d="M2 15l9-8 4.500 4.500L23 5" fill="none" stroke="#e6eef4" strokeWidth="1.500" />
        </svg>
        charts by&nbsp;<a href="#" className="font-bold underline">TradingView</a>
      </div>
    </div>
  );
}

const RANGES = ["1d", "5d", "1m", "3m", "1y", "5y"];

function BottomBar() {
  const divider = <i className="h-[13px] w-px shrink-0 bg-[#e0e0e0]" />;
  return (
    <footer className="flex h-[22px] items-center overflow-hidden whitespace-nowrap bg-[#181818] text-[11px] font-bold text-[#828282]">
      {RANGES.map((r, i) => (
        <React.Fragment key={r}>
          {i > 0 && divider}
          <button type="button" className="pl-[13px] pr-3">{r}</button>
        </React.Fragment>
      ))}
      <div className="-mr-[6px] ml-auto flex items-center text-[#57bde6]">
        <button type="button" className="pr-[10px]">Adjusted Price</button>
        {divider}
        <button type="button" className="w-[38px] pl-[3px] text-[#828282]">%</button>
        {divider}
        <button type="button" className="px-[13px] text-[#828282]">log</button>
        {divider}
        <button type="button" className="px-3">auto</button>
        {divider}
        <button type="button" aria-label="Chart settings" className="ml-[13px] text-[#828282]"><Settings className="h-3 w-3" strokeWidth={3} /></button>
      </div>
    </footer>
  );
}

export default function App() {
  return (
    <div className="overflow-hidden bg-white pl-2 pt-[60px] font-['Open_Sans',sans-serif]">
      <div className="bg-black">
        <NavBar />
        <TickerBar />
        <QuoteHeader />
        <main className="flex pl-2 font-['Liberation_Sans',sans-serif]">
          <Sidebar />
          <div className="min-w-0 flex-1">
            <div className="relative overflow-hidden">
              <Chart />
              <ChartOverlays />
            </div>
            <BottomBar />
          </div>
        </main>
        <div className="h-[14px] bg-linear-to-b from-black to-[#0b3059]" />
      </div>
    </div>
  );
}
